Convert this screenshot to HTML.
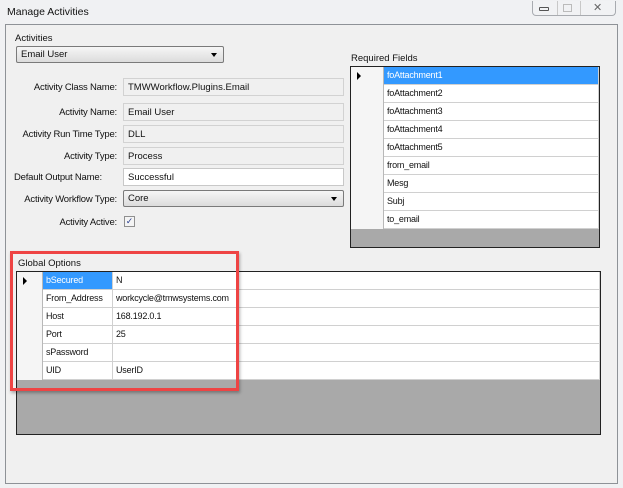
<!DOCTYPE html>
<html><head><style>
*{margin:0;padding:0;box-sizing:border-box}
body{width:623px;height:488px;overflow:hidden;background:#f0f1f3;font-family:"Liberation Sans",sans-serif;font-size:10px;color:#111;position:relative}
.a{position:absolute}
.client{left:5px;top:24px;width:613px;height:460px;background:#f0f0f0;border:1px solid #8e9297}
.lbl{position:absolute;text-align:right;width:110px;left:7px;font-size:9.5px;letter-spacing:-0.2px}
.fld{position:absolute;left:123px;width:221px;height:18px;border:1px solid #d2d2d2;background:#f0f0f0;padding:3px 4px;font-size:9.5px}
.combo{position:absolute;border:1px solid #7a7a7a;border-radius:2px;background:linear-gradient(#f6f6f6,#dcdcdc);padding:2px 4px;font-size:9.5px}
.combo:after{content:"";position:absolute;right:6px;top:6px;border-left:3.5px solid transparent;border-right:3.5px solid transparent;border-top:4px solid #000}
.grid{position:absolute;border:1px solid #222;background:#a9a9a9}
.row{position:absolute;left:0;right:0;height:18px;background:#fff;border-bottom:1px solid #d0d0d0}
.hd{position:absolute;left:0;top:0;height:18px;background:#f5f5f5;border-right:1px solid #b8b8b8}
.c{position:absolute;top:0;height:17px;padding:3px 3px;font-size:9px;border-right:1px solid #d0d0d0;white-space:nowrap;overflow:hidden;letter-spacing:-0.2px}
.sel{background:#3399ff;color:#fff}
.arr{position:absolute;left:6px;top:5px;border-top:4px solid transparent;border-bottom:4px solid transparent;border-left:4px solid #000}
</style></head><body>
<div class="a" style="left:7px;top:6px;font-size:10.5px">Manage Activities</div>
<div class="a" style="left:532px;top:1px;width:84px;height:15px;border:1px solid #a8abb0;border-top:none;border-radius:0 0 4px 4px;background:#f1f2f4"></div>
<div class="a" style="left:557px;top:1px;width:1px;height:14px;background:#c8c8c8"></div>
<div class="a" style="left:580px;top:1px;width:1px;height:14px;background:#c8c8c8"></div>
<div class="a" style="left:539px;top:7px;width:10px;height:4px;border:1px solid #555;border-radius:1px"></div>
<div class="a" style="left:563px;top:4px;width:9px;height:8px;border:1px solid #bbb"></div>
<div class="a" style="left:593px;top:1px;font-size:11px;color:#666">✕</div>
<div class="a client"></div>
<div class="a" style="left:15px;top:33px;font-size:9.5px">Activities</div>
<div class="combo" style="left:16px;top:46px;width:208px;height:17px">Email User</div>
<div class="lbl" style="top:82px">Activity Class Name:</div>
<div class="fld" style="top:78px">TMWWorkflow.Plugins.Email</div>
<div class="lbl" style="top:107px">Activity Name:</div>
<div class="fld" style="top:103px">Email User</div>
<div class="lbl" style="top:129px">Activity Run Time Type:</div>
<div class="fld" style="top:125px">DLL</div>
<div class="lbl" style="top:151px">Activity Type:</div>
<div class="fld" style="top:147px">Process</div>
<div class="a" style="left:14px;top:172px;font-size:9.5px;letter-spacing:-0.2px">Default Output Name:</div>
<div class="fld" style="top:168px;background:#fff;border-color:#c8c8c8">Successful</div>
<div class="lbl" style="top:194px">Activity Workflow Type:</div>
<div class="combo" style="left:123px;top:190px;width:221px;height:17px">Core</div>
<div class="lbl" style="top:217px">Activity Active:</div>
<div class="a" style="left:124px;top:216px;width:11px;height:11px;border:1px solid #8f8f8f;background:#f4f4f4;font-size:9px;line-height:9px;text-align:center;color:#2a3f8f">✓</div>

<div class="a" style="left:351px;top:53px;font-size:9.5px">Required Fields</div>
<div class="grid" style="left:350px;top:66px;width:250px;height:182px">
<div class="row" style="top:0"><div class="hd" style="width:33px"><div class="arr"></div></div><div class="c sel" style="left:33px;right:0">foAttachment1</div></div>
<div class="row" style="top:18px"><div class="hd" style="width:33px"></div><div class="c" style="left:33px;right:0">foAttachment2</div></div>
<div class="row" style="top:36px"><div class="hd" style="width:33px"></div><div class="c" style="left:33px;right:0">foAttachment3</div></div>
<div class="row" style="top:54px"><div class="hd" style="width:33px"></div><div class="c" style="left:33px;right:0">foAttachment4</div></div>
<div class="row" style="top:72px"><div class="hd" style="width:33px"></div><div class="c" style="left:33px;right:0">foAttachment5</div></div>
<div class="row" style="top:90px"><div class="hd" style="width:33px"></div><div class="c" style="left:33px;right:0">from_email</div></div>
<div class="row" style="top:108px"><div class="hd" style="width:33px"></div><div class="c" style="left:33px;right:0">Mesg</div></div>
<div class="row" style="top:126px"><div class="hd" style="width:33px"></div><div class="c" style="left:33px;right:0">Subj</div></div>
<div class="row" style="top:144px"><div class="hd" style="width:33px"></div><div class="c" style="left:33px;right:0">to_email</div></div>
</div>

<div class="a" style="left:18px;top:258px;font-size:9.5px">Global Options</div>
<div class="grid" style="left:16px;top:271px;width:585px;height:164px">
<div class="row" style="top:0"><div class="hd" style="width:26px"><div class="arr"></div></div><div class="c sel" style="left:26px;width:70px">bSecured</div><div class="c" style="left:96px;right:0">N</div></div>
<div class="row" style="top:18px"><div class="hd" style="width:26px"></div><div class="c" style="left:26px;width:70px">From_Address</div><div class="c" style="left:96px;right:0">workcycle@tmwsystems.com</div></div>
<div class="row" style="top:36px"><div class="hd" style="width:26px"></div><div class="c" style="left:26px;width:70px">Host</div><div class="c" style="left:96px;right:0">168.192.0.1</div></div>
<div class="row" style="top:54px"><div class="hd" style="width:26px"></div><div class="c" style="left:26px;width:70px">Port</div><div class="c" style="left:96px;right:0">25</div></div>
<div class="row" style="top:72px"><div class="hd" style="width:26px"></div><div class="c" style="left:26px;width:70px">sPassword</div><div class="c" style="left:96px;right:0"></div></div>
<div class="row" style="top:90px"><div class="hd" style="width:26px"></div><div class="c" style="left:26px;width:70px">UID</div><div class="c" style="left:96px;right:0">UserID</div></div>
</div>
<div class="a" style="left:10px;top:251px;width:229px;height:140px;border:3px solid #ee4444;box-shadow:1px 2px 3px rgba(0,0,0,0.3)"></div>
</body></html>
